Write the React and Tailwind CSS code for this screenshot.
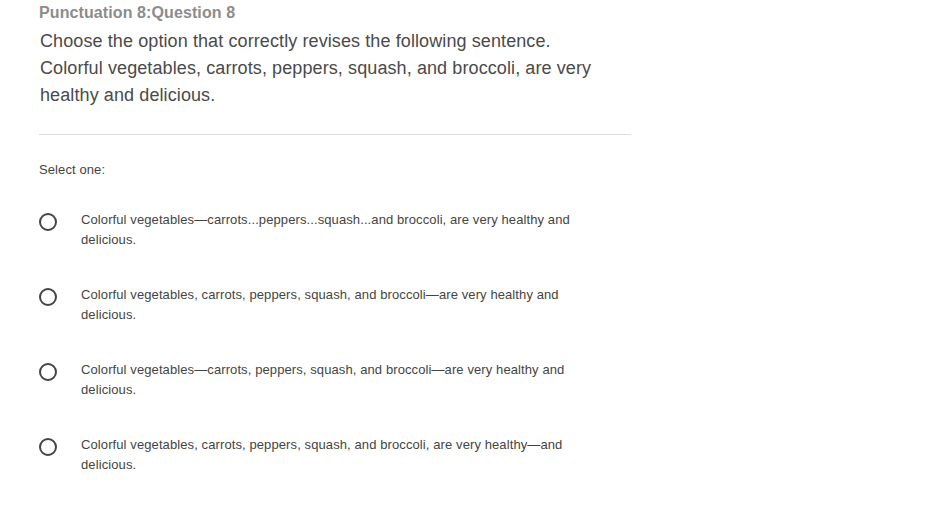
import React, { useState } from 'react'

const options = [
  'Colorful vegetables\u2014carrots...peppers...squash...and broccoli, are very healthy and delicious.',
  'Colorful vegetables, carrots, peppers, squash, and broccoli\u2014are very healthy and delicious.',
  'Colorful vegetables\u2014carrots, peppers, squash, and broccoli\u2014are very healthy and delicious.',
  'Colorful vegetables, carrots, peppers, squash, and broccoli, are very healthy\u2014and delicious.',
]

const App = () => {
  const [selected, setSelected] = useState(null)

  return (
    <div className="min-h-[511px] bg-white font-['Liberation_Sans',Arial,sans-serif]">
      <div className="w-[592px] ml-[39px] pt-[4px]">
        <h2 className="text-[16px] leading-[18px] font-bold text-[#8c8c8c] tracking-[0.1px]">Punctuation 8:Question 8</h2>
        <div className="mt-[6px] ml-px w-[565px] text-[18px] leading-[27px] text-[#4a4a4a] tracking-[0.1px]">
          <p>Choose the option that correctly revises the following sentence.</p>
          <p>Colorful vegetables, carrots, peppers, squash, and broccoli, are very healthy and delicious.</p>
        </div>
        <div className="mt-[25px] border-t border-[#dcdcdc]" />
        <p className="mt-[25px] text-[13px] leading-[20px] text-[#444] tracking-[0.1px]">Select one:</p>
        <div className="mt-[30px] flex flex-col gap-[35px]">
          {options.map((opt, i) => (
            <label key={i} className="flex items-start cursor-pointer" onClick={() => setSelected(i)}>
              <span className="mt-[3px] w-[18px] h-[18px] shrink-0 rounded-full border-2 border-[#444] flex items-center justify-center">
                {selected === i && <span className="w-[8px] h-[8px] rounded-full bg-[#444]" />}
              </span>
              <span className="ml-[24px] w-[505px] text-[13px] leading-[20px] text-[#444] tracking-[0.1px]">{opt}</span>
            </label>
          ))}
        </div>
      </div>
    </div>
  )
}

export default App
